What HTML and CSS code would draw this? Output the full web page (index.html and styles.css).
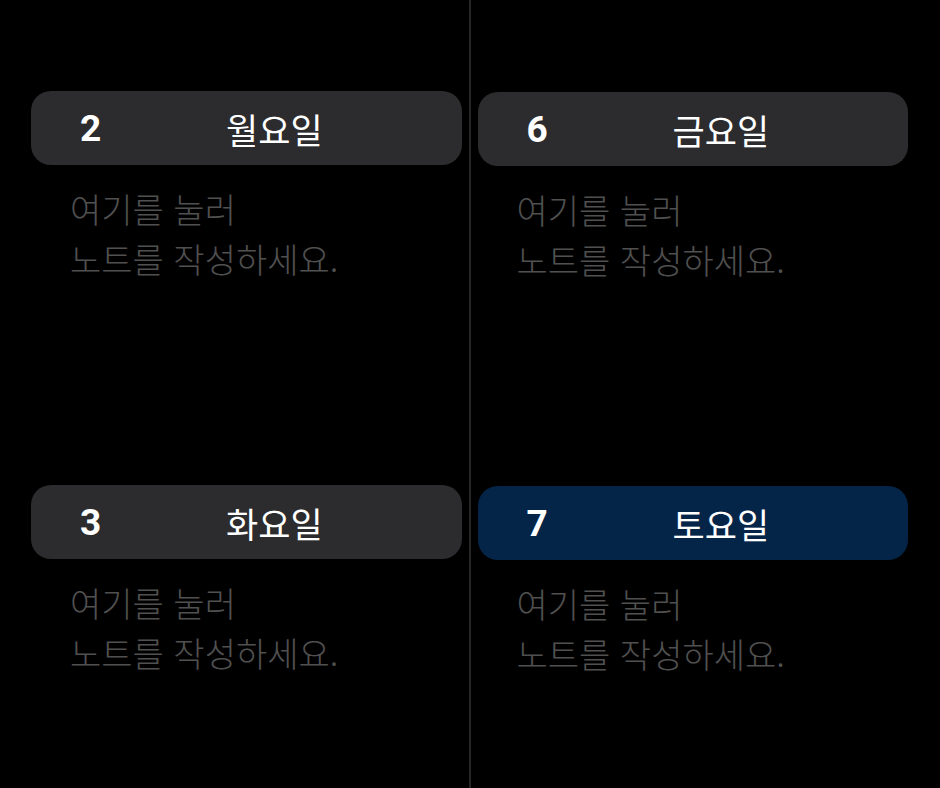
FILE: index.html
```html
<!DOCTYPE html>
<html lang="ko">
<head>
    <meta charset="UTF-8">
    <meta name="viewport" content="width=device-width, initial-scale=1.0">
    <title>주간 노트</title>
    <link rel="stylesheet" href="styles.css">
</head>
<body>
    <div class="board">
        <div class="column">
            <div class="day">
                <div class="day-header">
                    <span class="day-num">2</span>
                    <span class="day-name">월요일</span>
                </div>
                <div class="day-note">여기를 눌러<br>노트를 작성하세요.</div>
            </div>
            <div class="day">
                <div class="day-header">
                    <span class="day-num">3</span>
                    <span class="day-name">화요일</span>
                </div>
                <div class="day-note">여기를 눌러<br>노트를 작성하세요.</div>
            </div>
        </div>
        <div class="divider"></div>
        <div class="column right">
            <div class="day">
                <div class="day-header">
                    <span class="day-num">6</span>
                    <span class="day-name">금요일</span>
                </div>
                <div class="day-note">여기를 눌러<br>노트를 작성하세요.</div>
            </div>
            <div class="day">
                <div class="day-header today">
                    <span class="day-num">7</span>
                    <span class="day-name">토요일</span>
                </div>
                <div class="day-note">여기를 눌러<br>노트를 작성하세요.</div>
            </div>
        </div>
    </div>
</body>
</html>
```

FILE: styles.css
```css
* {
    margin: 0;
    padding: 0;
    box-sizing: border-box;
}

body {
    font-family: "Noto Sans CJK KR", "Noto Sans", sans-serif;
    background-color: #000;
    color: #fff;
    width: 940px;
    height: 788px;
    overflow: hidden;
}

.board {
    display: grid;
    grid-template-columns: 1fr 2px 1fr;
    column-gap: 7px;
    padding: 0 32px 0 31px;
    height: 788px;
    overflow: hidden;
}

.divider {
    background: #262626;
}

.column {
    display: flex;
    flex-direction: column;
    padding-top: 91px;
}

.column.right {
    padding-top: 92px;
}

.day {
    height: 394px;
}

.day:last-child {
    height: auto;
}

.day-header {
    height: 74px;
    border-radius: 20px;
    background: #2c2c2e;
    display: flex;
    align-items: center;
    padding-left: 49px;
}

.day-header.today {
    background: #052548;
}

.day-num {
    width: 146px;
    font-family: Roboto, "Noto Sans", sans-serif;
    font-size: 37px;
    font-weight: 700;
}

.day-name {
    font-size: 35px;
    font-weight: 400;
}

.day-note {
    padding: 19px 0 0 39px;
    font-size: 34px;
    line-height: 50px;
    font-weight: 300;
    color: #505050;
}
```
